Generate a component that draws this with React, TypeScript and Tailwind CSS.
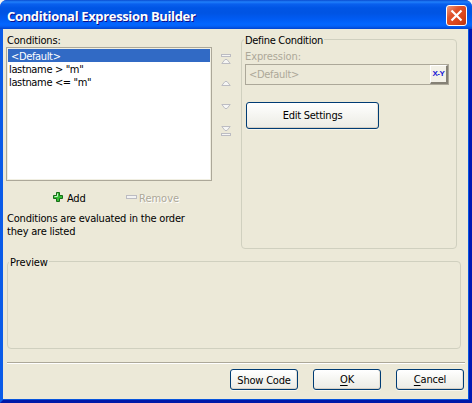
import type { ReactNode } from "react";

const conditions = ["<Default>", 'lastname > "m"', 'lastname <= "m"'];

function XpButton({ className, children }: { className: string; children: ReactNode }) {
  return (
    <button
      className={`flex items-center justify-center rounded-[3px] border border-[#003c74] bg-gradient-to-b from-white via-[#f5f5f1] to-[#ecebe4] text-black shadow-[0_1px_0_#f8f6ee,inset_0_-1px_0_#d6d0c5,inset_-1px_0_0_#e5e1d7] ${className}`}
    >
      {children}
    </button>
  );
}

function Arrow({ down, bar }: { down?: boolean; bar?: boolean }) {
  return (
    <svg
      width="10"
      height={bar ? 10 : 5}
      viewBox={bar ? "0 0 10 10" : "0 5 10 5"}
      className={`block ${down ? "-scale-y-100" : ""}`}
      fill="#f6f6f4"
      stroke="#bcbcc2"
    >
      {bar && <rect x="0.5" y="0.5" width="9" height="2" />}
      <path d="M0.8 9.5 L4 5.5 H6 L9.2 9.5 Z" />
    </svg>
  );
}

export default function App() {
  return (
    <div className="h-[403px] w-[472px] overflow-hidden bg-[#f4f3f0]">
      <div className="flex h-full w-full flex-col overflow-hidden rounded-t-[7px] bg-[#0831d9] font-['DejaVu_Sans_Condensed','DejaVu_Sans',sans-serif] text-[11px] leading-[13px] tracking-[-0.2px] text-black">
        <header className="flex h-[29px] shrink-0 items-center justify-between bg-[linear-gradient(to_bottom,#0a4bcf_0px,#2080fb_2px,#0a60ee_4px,#0055e5_8px,#0054e3_13px,#005bf3_19px,#0266ff_24px,#0462f8_26px,#0144d0_29px)] pl-[7px] pr-[5px] pt-[2px]">
          <h1 className="whitespace-nowrap font-['Open_Sans',sans-serif] text-[13px] font-bold leading-[18px] tracking-[-0.35px] text-white [text-shadow:1px_1px_0_#0f1089]">
            Conditional Expression Builder
          </h1>
          <button className="flex size-[21px] items-center justify-center rounded-[3px] border border-white bg-[linear-gradient(135deg,#ee9b80_0%,#e0532b_35%,#d9441a_70%,#b8330f_100%)]">
            <svg width="13" height="13" viewBox="0 0 13 13" stroke="white" strokeWidth="2.2">
              <path d="M1.5 1.5 L11.5 11.5 M11.5 1.5 L1.5 11.5" />
            </svg>
          </button>
        </header>

        <div className="flex h-[374px] flex-col border-x-[3px] border-b-[3px] border-b-[#0019a8] border-l-[#0a5be8] border-r-[#0019b4] bg-[#ece9d8] shadow-[inset_-1px_-1px_0_#0855dd]">
          <div className="flex h-[232px] shrink-0 pl-[3px]">
            <section className="w-[206px] pt-[5px]">
              <div className="pl-px">Conditions:</div>
              <ul className="h-[134px] border border-[#aca899] bg-white p-px tracking-[-0.35px] shadow-[inset_0_0_0_1px_#f1efe2]">
                {conditions.map((text, i) => (
                  <li
                    key={text}
                    className={`h-[13px] whitespace-nowrap leading-[15px] ${
                      i === 0 ? "bg-[#316ac5] pl-[3px] text-white" : "pl-px"
                    }`}
                  >
                    {text}
                  </li>
                ))}
              </ul>
              <div className="flex h-[31px] items-center pl-[47px] pt-[3px]">
                <svg width="10" height="10" viewBox="0 0 10 10" className="-mt-[3px]">
                  <path d="M3.5 .5h3v3h3v3h-3v3h-3v-3h-3v-3h3z" fill="#35bd35" stroke="#166b16" />
                  <path d="M4.5 1.5v3h-3" fill="none" stroke="#c5f2c5" />
                </svg>
                <span className="w-[63px] pl-[4px]">Add</span>
                <svg width="11" height="4" viewBox="0 0 11 4" className="-mt-[3px]">
                  <rect x=".5" y=".5" width="10" height="3" fill="#f3f3f2" stroke="#bcbcc2" />
                </svg>
                <span className="pl-[2px] tracking-[0px] text-[#aca899] [text-shadow:1px_1px_0_white]">Remove</span>
              </div>
              <p className="whitespace-nowrap pl-px">
                Conditions are evaluated in the order
                <br />
                they are listed
              </p>
            </section>

            <div className="flex w-[29px] flex-col items-start pl-[9px] pt-[25px]">
              <Arrow bar />
              <div className="pt-[17px]"><Arrow /></div>
              <div className="pt-[18px]"><Arrow down /></div>
              <div className="pt-[17px]"><Arrow down bar /></div>
            </div>

            <section className="mt-[10px] h-[210px] w-[216px] rounded-[4px] border border-[#d0d0bf] px-[4px]">
              <h2 className="-ml-[2px] -mt-[6px] w-fit whitespace-nowrap bg-[#ece9d8] px-px tracking-[-0.3px]">Define Condition</h2>
              <div className="-ml-px mt-[3px] tracking-[-0.1px] text-[#aca899]">Expression:</div>
              <div className="-ml-px mt-px flex h-[21px] w-[204px] items-center justify-between border border-[#aca899] pl-[3px] text-[#aca899]">
                <span className="tracking-[-0.3px]">&lt;Default&gt;</span>
                <button className="flex h-[19px] w-[18px] items-center justify-center border-b-2 border-l border-r-2 border-t border-b-[#858175] border-l-white border-r-[#858175] border-t-white bg-[#f3f1e7] font-['Liberation_Sans',sans-serif] text-[8px] font-bold leading-none tracking-[-0.4px] text-[#1719d6]">
                  X-Y
                </button>
              </div>
              <XpButton className="mt-[17px] h-[27px] w-[133px] tracking-[-0.25px]">Edit Settings</XpButton>
            </section>
          </div>

          <section className="ml-[4px] h-[88px] w-[454px] shrink-0 rounded-[4px] border border-[#d0d0bf]">
            <h2 className="-mt-[6px] ml-px w-fit bg-[#ece9d8] px-px tracking-[-0.1px]">Preview</h2>
          </section>

          <footer className="ml-[4px] mt-[13px] flex w-[458px] justify-end gap-[15px] border-t border-[#aca899] pr-px pt-[6px] shadow-[inset_0_1px_0_white]">
            <XpButton className="h-[21px] w-[68px] pt-px">Show Code</XpButton>
            <XpButton className="h-[21px] w-[68px]"><span><u className="underline-offset-2">O</u>K</span></XpButton>
            <XpButton className="h-[21px] w-[68px]"><span><u className="underline-offset-2">C</u>ancel</span></XpButton>
          </footer>
        </div>
      </div>
    </div>
  );
}
